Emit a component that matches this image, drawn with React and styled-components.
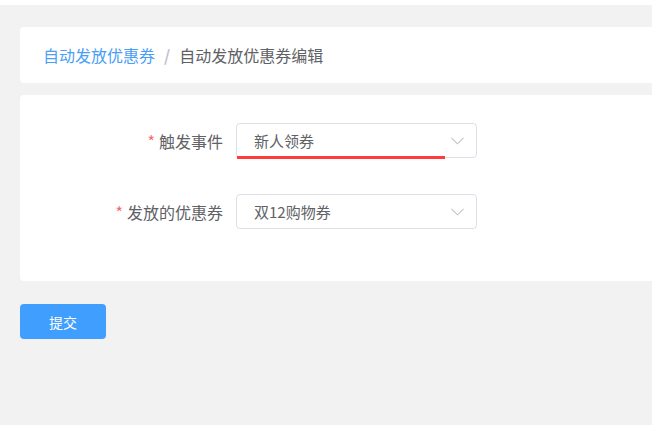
import React from 'react';
import styled, { createGlobalStyle } from 'styled-components';

const GlobalStyle = createGlobalStyle`
  html, body {
    margin: 0;
    padding: 0;
    background: #f2f2f2;
    overflow: hidden;
    font-family: "Noto Sans CJK SC", "Noto Sans", sans-serif;
  }
`;

const TopStrip = styled.div`
  height: 5px;
  background: #ffffff;
`;

const Page = styled.div`
  padding: 22px 0 0 20px;
  display: flex;
  flex-direction: column;
  height: 420px;
  box-sizing: border-box;
`;

const Card = styled.div`
  background: #ffffff;
  border-radius: 4px 0 0 4px;
`;

const BreadcrumbCard = styled(Card)`
  height: 56px;
  display: flex;
  align-items: center;
  padding-left: 23px;
  font-size: 16px;
`;

const Crumb = styled.span`
  color: ${p => (p.$link ? '#4a9ff5' : '#606266')};
`;

const Sep = styled.span`
  color: #c0c4cc;
  margin: 0 9px;
  font-weight: bold;
`;

const FormCard = styled(Card)`
  margin-top: 12px;
  padding: 28px 0 16px;
`;

const FormItem = styled.div`
  display: flex;
  align-items: center;
  margin-bottom: 36px;
`;

const Label = styled.label`
  width: 216px;
  box-sizing: border-box;
  padding-right: 13px;
  text-align: right;
  font-size: 16px;
  color: #606266;
`;

const Star = styled.span`
  color: #f56c6c;
  margin-right: 4px;
`;

const Select = styled.div`
  position: relative;
  width: 241px;
  height: 35px;
  box-sizing: border-box;
  border: 1px solid #dcdfe6;
  border-radius: 4px;
  display: flex;
  align-items: center;
  justify-content: space-between;
  padding: 0 12px 0 17px;
  font-size: 15px;
  color: #606266;
`;

const Mark = styled.div`
  position: absolute;
  left: 0;
  top: 32px;
  width: 208px;
  height: 3px;
  background: #ff3b3b;
`;

const Button = styled.button`
  margin-top: 23px;
  width: 86px;
  height: 35px;
  border: none;
  border-radius: 4px;
  background: #409eff;
  color: #ffffff;
  font-size: 14px;
  font-family: inherit;
`;

const Chevron = () => (
  <svg width="13" height="8" viewBox="0 0 13 8" fill="none">
    <path d="M0.5 0.8 L6.5 6.8 L12.5 0.8" stroke="#c0c4cc" strokeWidth="1.1" />
  </svg>
);

export default function App() {
  return (
    <>
      <GlobalStyle />
      <TopStrip />
      <Page>
        <BreadcrumbCard>
          <Crumb $link>自动发放优惠券</Crumb>
          <Sep>/</Sep>
          <Crumb>自动发放优惠券编辑</Crumb>
        </BreadcrumbCard>
        <FormCard>
          <FormItem>
            <Label><Star>*</Star>触发事件</Label>
            <Select>
              <span>新人领券</span>
              <Chevron />
              <Mark />
            </Select>
          </FormItem>
          <FormItem>
            <Label><Star>*</Star>发放的优惠券</Label>
            <Select>
              <span>双12购物券</span>
              <Chevron />
            </Select>
          </FormItem>
        </FormCard>
        <div>
          <Button>提交</Button>
        </div>
      </Page>
    </>
  );
}
